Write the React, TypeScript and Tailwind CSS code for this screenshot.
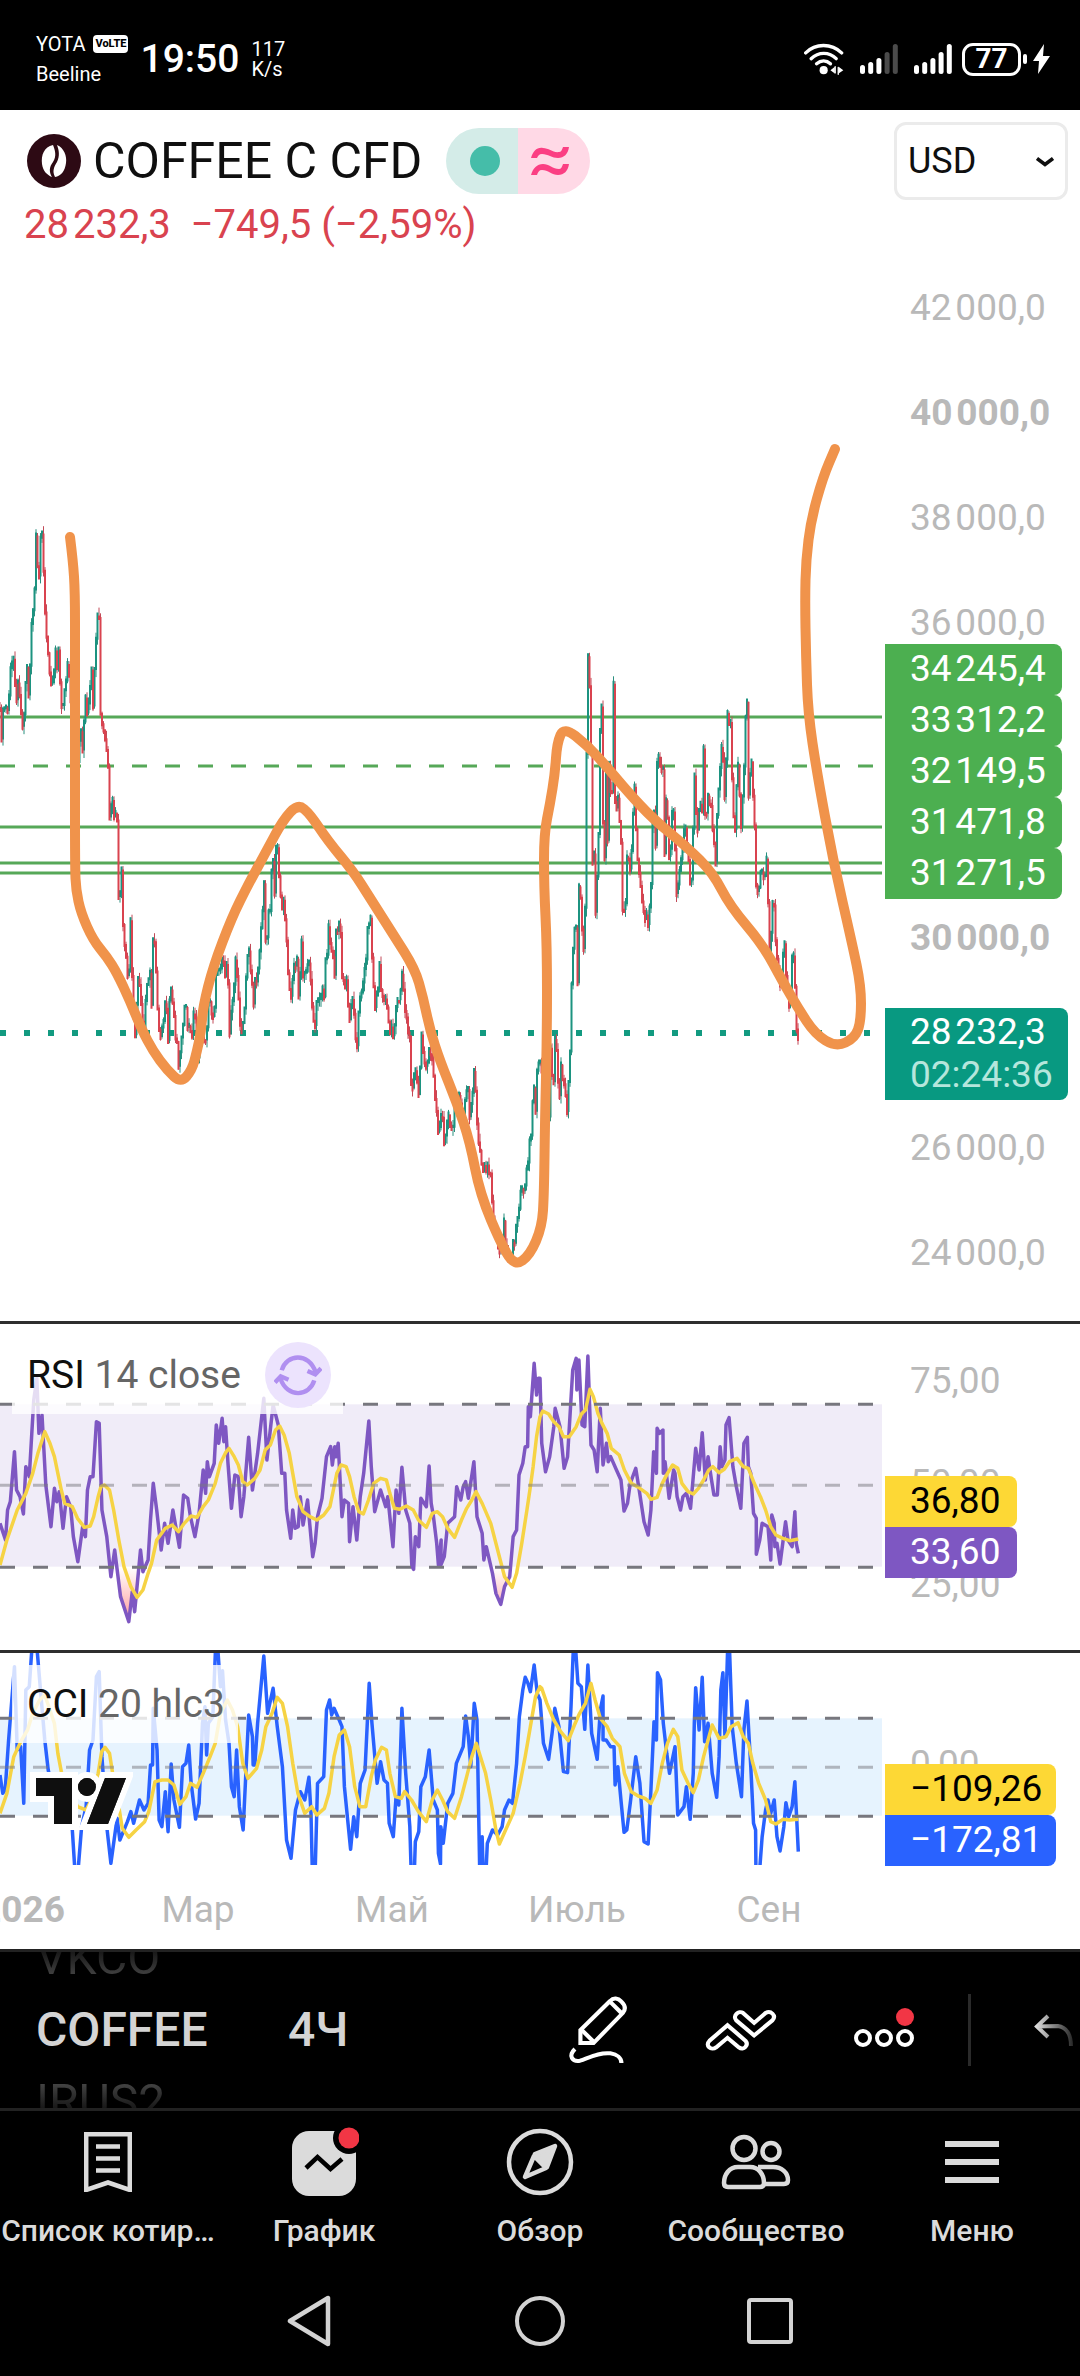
import type { ReactNode } from "react";
import clsx from "clsx";

type Point = [number, number];

/* ---------- data ---------- */

const priceSwings: Point[] = [
  [0, 707], [3, 731], [6, 708], [9, 712], [12, 676], [16, 652], [17, 697], [21, 684], [24, 728],
  [29, 657], [30, 699], [33, 624], [36, 592], [37, 534], [40, 586], [43, 530], [46, 592], [49, 651],
  [53, 695], [57, 642], [59, 676], [60, 644], [62, 691], [65, 710], [69, 658], [72, 700], [74, 740],
  [79, 762], [82, 730], [84, 743], [87, 703], [89, 722], [93, 678], [94, 707], [97, 666], [98, 630],
  [101, 612], [102, 718], [105, 733], [109, 754], [111, 827], [114, 798], [115, 829], [118, 799],
  [120, 906], [123, 871], [124, 927], [127, 959], [130, 988], [132, 923], [134, 994], [137, 1036],
  [140, 967], [145, 1028], [151, 971], [153, 997], [155, 933], [158, 978], [161, 1043], [165, 1013],
  [168, 1005], [169, 1063], [172, 985], [176, 1020], [181, 1066], [184, 1017], [187, 1015],
  [192, 1036], [196, 1012], [200, 1059], [203, 1009], [205, 1051], [211, 1001], [215, 1013],
  [219, 967], [224, 957], [229, 978], [231, 1030], [237, 959], [240, 1001], [244, 1040], [247, 994],
  [250, 940], [255, 1001], [258, 978], [262, 936], [266, 883], [267, 942], [272, 898], [274, 847],
  [276, 887], [278, 848], [281, 871], [283, 909], [286, 906], [288, 946], [291, 996], [298, 955],
  [300, 997], [303, 948], [305, 984], [308, 961], [312, 971], [316, 1038], [319, 994], [325, 994],
  [330, 929], [336, 971], [337, 932], [342, 932], [344, 982], [348, 978], [351, 1022], [354, 997],
  [358, 1053], [361, 997], [367, 974], [369, 932], [372, 909], [374, 971], [377, 1009], [381, 973],
  [386, 994], [390, 1024], [394, 1040], [398, 994], [401, 1013], [404, 963], [406, 1009],
  [411, 1040], [413, 1097], [417, 1064], [420, 1100], [423, 1042], [427, 1074], [430, 1047],
  [434, 1066], [437, 1100], [440, 1129], [443, 1112], [447, 1146], [450, 1107], [452, 1140],
  [458, 1092], [465, 1116], [469, 1081], [471, 1120], [475, 1073], [480, 1133], [485, 1168],
  [492, 1168], [494, 1207], [498, 1238], [502, 1246], [505, 1220], [509, 1251], [513, 1255],
  [518, 1225], [522, 1199], [527, 1181], [531, 1144], [533, 1138], [535, 1071], [537, 1107],
  [539, 1068], [546, 1060], [550, 1138], [552, 1055], [555, 1077], [556, 1023], [561, 1094],
  [563, 1060], [566, 1090], [569, 1107], [571, 1060], [573, 995], [575, 947], [577, 921],
  [579, 977], [581, 862], [584, 938], [586, 947], [587, 869], [589, 652], [591, 691], [593, 773],
  [594, 869], [595, 830], [597, 912], [600, 830], [602, 708], [603, 702], [604, 808], [606, 856],
  [607, 754], [609, 839], [611, 752], [613, 817], [615, 685], [617, 843], [619, 786], [622, 826],
  [624, 906], [627, 899], [629, 843], [632, 878], [636, 782], [638, 856], [642, 878], [645, 904],
  [650, 936], [653, 869], [655, 800], [657, 843], [659, 732], [661, 773], [664, 756], [666, 847],
  [668, 778], [671, 865], [674, 804], [677, 852], [678, 893], [682, 860], [687, 826], [692, 893],
  [694, 850], [696, 773], [699, 834], [701, 793], [703, 834], [705, 745], [707, 830], [709, 786],
  [713, 808], [717, 860], [719, 808], [721, 773], [723, 741], [726, 797], [729, 708], [732, 726],
  [734, 795], [737, 830], [739, 756], [743, 826], [747, 717], [749, 702], [750, 786], [753, 760],
  [756, 830], [758, 908], [763, 856], [765, 880], [768, 856], [771, 947], [775, 891], [777, 947],
  [781, 990], [786, 943], [790, 1014], [795, 947], [797, 1003], [799, 1038],
];

const brush: Point[] = [
  [70, 537], [73, 561], [75, 592], [75, 653], [75, 768], [75, 867], [76, 890], [81, 913], [93, 940],
  [107, 957], [117, 973], [130, 1001], [142, 1030], [153, 1051], [167, 1070], [181, 1083],
  [192, 1070], [197, 1051], [201, 1032], [203, 1007], [213, 967], [232, 917], [248, 885],
  [267, 850], [283, 820], [298, 804], [310, 814], [328, 841], [353, 871], [370, 898], [393, 934],
  [415, 969], [423, 997], [430, 1030], [440, 1061], [457, 1103], [470, 1142], [480, 1194],
  [502, 1246], [515, 1266], [530, 1255], [542, 1227], [544, 1194], [545, 1120], [547, 1034],
  [547, 947], [544, 886], [544, 834], [550, 804], [555, 773], [557, 743], [564, 727], [587, 745],
  [607, 767], [627, 791], [653, 819], [687, 847], [713, 873], [730, 906], [763, 945], [783, 982],
  [798, 1008], [815, 1034], [836, 1047], [855, 1038], [861, 1021], [861, 986], [852, 943],
  [833, 860], [817, 773], [808, 713], [806, 656], [805, 600], [806, 560], [811, 520], [823, 477],
  [835, 449],
];

// indicator series are split in two halves, each one 1568 units wide
const HALF = 1568;
const join = (a: Point[], b: Point[]): Point[] => [...a, ...b.map(([x, y]): Point => [x + HALF, y])];

const rsi = join(
  [
    [0, 640], [16, 690], [22, 600], [30, 575], [42, 425], [48, 540], [58, 560], [68, 612], [75, 470],
    [85, 500], [98, 270], [107, 205], [113, 370], [122, 315], [133, 525], [148, 650], [158, 535],
    [165, 575], [172, 545], [183, 655], [193, 560], [205, 590], [213, 680], [226, 755], [240, 650],
    [248, 680], [254, 540], [262, 500], [270, 500], [280, 335], [288, 340], [296, 600], [310, 680],
    [322, 800], [333, 720], [350, 860], [374, 935], [384, 845], [391, 905], [408, 720], [415, 785],
    [430, 750], [437, 630], [445, 520], [455, 600], [468, 720], [478, 640], [488, 700], [502, 600],
    [521, 712], [533, 555], [545, 565], [553, 620], [566, 680], [578, 610], [590, 480], [597, 550],
    [602, 455], [608, 500], [622, 460], [628, 345], [635, 400], [645, 325], [650, 395], [655, 350],
    [662, 460], [672, 595], [682, 495], [692, 500], [700, 620], [708, 560], [722, 382], [733, 540],
    [748, 430], [766, 265], [775, 450], [793, 285], [808, 345], [818, 490], [827, 490], [832, 600],
    [844, 685], [850, 600], [857, 655], [866, 650], [872, 560], [880, 645], [893, 570], [908, 740],
    [915, 700], [922, 620], [935, 565], [948, 440], [960, 410], [965, 465], [972, 410], [976, 440],
    [982, 400], [993, 620], [1000, 570], [1012, 580], [1015, 695], [1025, 590], [1036, 690],
    [1046, 560], [1056, 490], [1071, 333], [1078, 470], [1088, 605], [1105, 540], [1120, 590],
    [1126, 560], [1141, 710], [1150, 540], [1158, 610], [1167, 472], [1178, 600], [1190, 640],
    [1196, 770], [1201, 778], [1206, 680], [1216, 710], [1222, 565], [1238, 590], [1246, 468],
    [1252, 580], [1258, 615], [1268, 700], [1273, 765], [1281, 690], [1280, 765], [1290, 740],
    [1300, 640], [1320, 620], [1326, 530], [1338, 570], [1345, 530], [1352, 515], [1360, 565],
    [1376, 455], [1385, 620], [1400, 670], [1405, 750], [1412, 710], [1430, 790], [1440, 850],
    [1454, 883], [1465, 830], [1480, 800], [1490, 680], [1500, 660], [1507, 495], [1518, 460],
    [1525, 410], [1532, 410], [1534, 290], [1540, 320], [1551, 160], [1558, 255], [1563, 205],
  ],
  [
    [0, 205], [5, 400], [16, 485], [28, 440], [40, 350], [44, 295], [58, 350], [70, 475], [80, 440],
    [95, 180], [105, 145], [107, 240], [113, 150], [122, 345], [130, 350], [139, 138], [148, 405],
    [157, 420], [166, 485], [175, 295], [183, 465], [193, 400], [198, 455], [205, 440], [222, 480],
    [235, 510], [244, 603], [254, 580], [262, 520], [278, 475], [288, 540], [302, 635], [314, 675],
    [322, 600], [330, 425], [338, 490], [340, 355], [347, 370], [357, 360], [358, 490], [363, 455],
    [375, 565], [388, 480], [392, 490], [398, 560], [408, 600], [415, 560], [425, 550], [437, 595],
    [445, 500], [452, 415], [462, 480], [471, 368], [480, 510], [488, 440], [498, 510], [505, 555],
    [515, 555], [523, 410], [528, 470], [537, 450], [540, 345], [549, 323], [560, 470], [570, 530],
    [583, 595], [592, 400], [602, 382], [605, 470], [612, 490], [620, 610], [628, 625], [628, 733],
    [638, 690], [645, 640], [662, 650], [670, 750], [673, 615], [680, 640], [682, 710], [688, 700],
    [697, 762], [713, 635], [720, 690], [732, 710], [740, 605], [744, 700], [750, 730],
  ],
);

const rsiAverage = join(
  [
    [0, 765], [20, 690], [50, 600], [75, 550], [95, 490], [110, 430], [130, 365], [145, 400],
    [158, 440], [168, 490], [178, 540], [188, 580], [210, 590], [225, 625], [245, 652], [262, 648],
    [272, 620], [285, 560], [293, 530], [303, 525], [318, 540], [330, 600], [345, 690], [360, 770],
    [380, 830], [398, 862], [415, 840], [430, 790], [440, 760], [455, 690], [480, 655], [500, 645],
    [518, 665], [535, 640], [555, 618], [572, 622], [590, 590], [605, 570], [625, 520], [640, 460],
    [655, 428], [665, 415], [680, 440], [692, 465], [705, 515], [718, 525], [740, 505], [755, 480],
    [770, 420], [785, 405], [800, 360], [812, 348], [825, 375], [840, 430], [850, 490], [862, 560],
    [880, 605], [900, 620], [920, 630], [940, 615], [958, 590], [968, 540], [978, 490], [990, 465],
    [1005, 470], [1015, 500], [1028, 560], [1042, 605], [1055, 612], [1070, 570], [1085, 520],
    [1105, 505], [1122, 510], [1132, 550], [1145, 595], [1160, 598], [1180, 588], [1200, 600],
    [1215, 630], [1238, 652], [1255, 610], [1270, 605], [1285, 620], [1300, 655], [1320, 682],
    [1340, 630], [1355, 595], [1370, 570], [1382, 545], [1400, 580], [1425, 640], [1445, 720],
    [1465, 800], [1487, 832], [1500, 790], [1515, 700], [1530, 600], [1540, 530], [1548, 470],
    [1558, 380],
  ],
  [
    [0, 320], [8, 303], [25, 312], [40, 335], [55, 350], [68, 380], [85, 380], [105, 350], [120, 312],
    [132, 300], [145, 238], [155, 260], [168, 310], [180, 340], [195, 370], [207, 415], [230, 435],
    [245, 480], [265, 520], [290, 535], [310, 550], [322, 568], [340, 562], [355, 520], [370, 490],
    [385, 465], [400, 475], [412, 520], [430, 545], [445, 552], [460, 535], [475, 510], [490, 480],
    [502, 470], [520, 488], [535, 478], [550, 455], [572, 445], [590, 470], [605, 475], [622, 520],
    [640, 560], [655, 600], [670, 650], [685, 675], [705, 685], [725, 692], [750, 687],
  ],
);

const cci = join(
  [
    [0, 405], [8, 460], [15, 450], [25, 300], [42, 80], [50, 330], [60, 320], [69, 490], [75, 150],
    [85, 140], [93, 20], [107, 20], [120, 180], [130, 300], [140, 390], [160, 480], [190, 500],
    [210, 570], [218, 700], [226, 700], [237, 560], [250, 500], [260, 330], [270, 300], [280, 110],
    [288, 95], [296, 350], [310, 560], [322, 670], [340, 535], [348, 600], [370, 545], [380, 515],
    [388, 550], [405, 480], [418, 510], [430, 490], [437, 375], [443, 375], [445, 205], [456, 330],
    [462, 540], [470, 560], [480, 455], [488, 575], [497, 372], [505, 480], [521, 562], [530, 380],
    [540, 370], [548, 315], [555, 430], [568, 537], [578, 490], [588, 250], [595, 200], [600, 345],
    [605, 250], [618, 230], [626, 20], [632, 20], [640, 140], [646, 92], [655, 240], [665, 310],
    [672, 440], [680, 470], [687, 330], [695, 500], [706, 570], [722, 225], [733, 290], [735, 375],
    [740, 375], [748, 250], [756, 160], [766, 48], [777, 220], [793, 145], [805, 260], [820, 380],
    [832, 600], [845, 655], [858, 510], [872, 455], [885, 480], [897, 412], [903, 520], [907, 700],
    [915, 700], [922, 430], [940, 410], [948, 210], [957, 180], [963, 225], [970, 205], [985, 240],
    [993, 260], [1000, 440], [1018, 628], [1027, 530], [1036, 590], [1046, 430], [1060, 390],
    [1072, 130], [1080, 250], [1095, 430], [1105, 365], [1115, 420], [1125, 430], [1130, 550],
    [1142, 590], [1150, 470], [1158, 495], [1167, 205], [1178, 400], [1190, 560], [1194, 700],
    [1203, 700], [1206, 605], [1216, 575], [1222, 440], [1235, 410], [1246, 330], [1258, 480],
    [1270, 510], [1273, 640], [1279, 672], [1280, 560], [1287, 610], [1300, 490], [1315, 460],
    [1325, 370], [1345, 320], [1352, 228], [1360, 290], [1367, 380], [1377, 190], [1385, 240],
    [1393, 700], [1400, 590], [1403, 700], [1411, 700], [1415, 610], [1430, 570], [1445, 585],
    [1458, 560], [1465, 510], [1478, 480], [1488, 490], [1500, 370], [1508, 230], [1518, 150],
    [1525, 112], [1533, 130], [1540, 155], [1551, 75], [1560, 160],
  ],
  [
    [0, 180], [10, 310], [25, 358], [35, 280], [43, 205], [55, 260], [68, 395], [80, 398], [90, 200],
    [97, 20], [103, 20], [110, 130], [120, 140], [130, 268], [139, 75], [150, 280], [166, 358],
    [175, 210], [183, 168], [183, 300], [192, 300], [205, 320], [215, 320], [218, 435], [226, 380],
    [235, 480], [244, 577], [252, 570], [262, 490], [278, 350], [290, 430], [302, 605], [314, 612],
    [322, 450], [331, 245], [338, 300], [341, 98], [350, 120], [358, 250], [368, 340], [376, 400],
    [392, 320], [400, 525], [418, 500], [425, 440], [436, 538], [445, 400], [448, 250], [452, 143],
    [462, 270], [471, 112], [478, 305], [488, 250], [500, 400], [513, 472], [520, 350], [525, 150],
    [531, 98], [537, 290], [545, 20], [550, 20], [558, 260], [570, 370], [585, 470], [592, 270],
    [601, 183], [612, 380], [620, 550], [626, 570], [627, 700], [637, 700], [645, 590], [655, 510],
    [662, 480], [670, 520], [680, 480], [688, 590], [697, 633], [708, 560], [714, 488], [722, 530],
    [732, 500], [740, 425], [750, 635],
  ],
);

const cciAverage = join(
  [
    [0, 520], [20, 460], [40, 350], [60, 305], [80, 270], [95, 220], [115, 180], [130, 165],
    [145, 210], [158, 250], [168, 340], [178, 395], [200, 440], [225, 500], [250, 510], [270, 470],
    [285, 400], [295, 335], [305, 322], [318, 340], [330, 420], [345, 500], [355, 565], [374, 592],
    [395, 570], [420, 545], [432, 515], [450, 425], [470, 420], [488, 420], [505, 435], [522, 493],
    [540, 470], [553, 430], [572, 442], [590, 400], [610, 350], [625, 310], [640, 220], [660, 180],
    [675, 210], [690, 260], [705, 370], [720, 415], [745, 385], [760, 330], [772, 260], [790, 220],
    [805, 172], [820, 190], [835, 260], [850, 370], [865, 460], [885, 520], [905, 500], [920, 525],
    [942, 505], [955, 460], [970, 350], [985, 285], [1000, 270], [1015, 320], [1030, 440],
    [1045, 500], [1062, 500], [1078, 410], [1090, 360], [1108, 322], [1122, 330], [1132, 400],
    [1148, 470], [1165, 475], [1175, 455], [1195, 480], [1215, 515], [1238, 545], [1255, 480],
    [1270, 450], [1285, 480], [1300, 515], [1320, 535], [1340, 470], [1355, 410], [1370, 350],
    [1383, 310], [1395, 350], [1410, 400], [1425, 480], [1440, 570], [1450, 612], [1468, 570],
    [1490, 520], [1510, 430], [1525, 350], [1540, 260], [1555, 170],
  ],
  [
    [0, 140], [5, 145], [20, 190], [40, 240], [60, 275], [82, 302], [100, 255], [115, 220],
    [132, 190], [148, 130], [160, 180], [175, 235], [195, 260], [210, 295], [232, 320], [245, 400],
    [265, 455], [285, 468], [305, 475], [322, 490], [340, 450], [355, 370], [370, 310], [387, 268],
    [400, 290], [412, 390], [430, 430], [445, 458], [460, 420], [475, 350], [488, 300], [500, 255],
    [520, 295], [540, 290], [555, 260], [575, 248], [590, 290], [605, 310], [618, 370], [635, 430],
    [655, 480], [670, 545], [685, 552], [705, 538], [725, 540], [750, 538],
  ],
);

// prices group their thousands with a hair space
const priceTicks = [
  { label: "42\u200a000,0" },
  { label: "40\u200a000,0", major: true },
  { label: "38\u200a000,0" },
  { label: "36\u200a000,0" },
  { label: "" },
  { label: "" },
  { label: "30\u200a000,0", major: true },
  { label: "" },
  { label: "26\u200a000,0" },
  { label: "24\u200a000,0" },
];

const levelLabels = ["34\u200a245,4", "33\u200a312,2", "32\u200a149,5", "31\u200a471,8", "31\u200a271,5"];

/* ---------- path helpers ---------- */

const line = (points: Point[]) => "M" + points.map(([x, y]) => `${x} ${y}`).join("L");

// quadratic segments through the midpoints give a hand-drawn curve
function smooth(points: Point[]) {
  let d = `M${points[0][0]} ${points[0][1]}`;
  for (let i = 1; i < points.length - 1; i++) {
    const [x, y] = points[i];
    const [nx, ny] = points[i + 1];
    d += `Q${x} ${y} ${(x + nx) / 2} ${(y + ny) / 2}`;
  }
  const last = points[points.length - 1];
  return d + `L${last[0]} ${last[1]}`;
}

const noise = (n: number) => {
  const v = Math.sin(n * 12.9898) * 43758.5453;
  return v - Math.floor(v);
};

const BAR = 1.5;

function buildCandles(points: Point[]) {
  const out = { upBody: "", upWick: "", downBody: "", downWick: "" };
  let seg = 0;
  const at = (x: number) => {
    while (seg < points.length - 2 && points[seg + 1][0] < x) seg++;
    const [x0, y0] = points[seg];
    const [x1, y1] = points[seg + 1];
    return y0 + ((y1 - y0) * (x - x0)) / (x1 - x0);
  };
  let open = points[0][1];
  const end = points[points.length - 1][0];
  for (let i = 0; i * BAR < end; i++) {
    const x = i * BAR;
    const close = at(x + BAR) + (noise(i) - 0.5) * 20;
    const top = Math.min(open, close) - noise(i + 500) * 8;
    const low = Math.max(open, close) + noise(i + 900) * 8;
    const body = `M${x} ${open.toFixed(1)}V${(close + (close > open ? 3 : -3)).toFixed(1)}`;
    const wick = `M${x} ${top.toFixed(1)}V${low.toFixed(1)}`;
    if (close < open) {
      out.upBody += body;
      out.upWick += wick;
    } else {
      out.downBody += body;
      out.downWick += wick;
    }
    open = close;
  }
  return out;
}

const candles = buildCandles(priceSwings);

/* ---------- status bar ---------- */

function SignalBars({ active }: { active: number }) {
  return (
    <svg viewBox="0 0 38 30" className="w-[38px] h-[30px]">
      {[9, 12, 16, 22, 30].map((h, i) => (
        <rect key={h} x={i * 8.2} y={30 - h} width="5" height={h} rx="2.5" fill={i < active ? "#fff" : "#4b4b4b"} />
      ))}
    </svg>
  );
}

function StatusBar() {
  return (
    <div className="flex items-center justify-between pl-9 pr-[30px] pt-2 h-[110px] bg-black text-white">
      <div className="flex items-center">
        <div className="flex flex-col text-[20px] leading-[30px]">
          <div className="flex items-center gap-2">
            <span>YOTA</span>
            <span className="rounded bg-white px-[2px] text-[11px] leading-[18px] font-extrabold text-black">VoLTE</span>
          </div>
          <span>Beeline</span>
        </div>
        <span className="ml-3 text-[39px] leading-[44px] font-medium">19:50</span>
        <div className="ml-3 flex flex-col text-[20px] leading-[20px]">
          <span>117</span>
          <span>K/s</span>
        </div>
      </div>
      <div className="flex items-center">
        <svg viewBox="74 70 118 94" className="w-[40px] h-[32px] mr-4" fill="none" stroke="#fff" strokeWidth="10" strokeLinecap="round">
          <path d="M79 99C108 70 155 70 185 99" />
          <path d="M95 116C117 95 148 95 169 116" />
          <path d="M111 131C124 120 140 120 152 131" />
          <circle cx="132" cy="150" r="12" fill="#fff" stroke="none" />
          <path d="M152 150L165 140V160ZM190 150L176 140V160Z" fill="#fff" stroke="none" />
          <path d="M166 140V158M175 142V162" strokeWidth="4" />
        </svg>
        <SignalBars active={3} />
        <div className="w-4" />
        <SignalBars active={5} />
        <div className="ml-[10px] flex h-[33px] w-[59px] items-center justify-center rounded-[11px] border-[3px] border-white text-[28px] leading-[28px] font-bold">
          77
        </div>
        <div className="ml-[2px] h-[10px] w-[4px] rounded-sm bg-white" />
        <svg viewBox="0 0 17 30" className="ml-[6px] w-[17px] h-[30px]" fill="#fff">
          <path d="M11 0L0 17H6L5 30L17 12H10Z" />
        </svg>
      </div>
    </div>
  );
}

/* ---------- chart ---------- */

function ChartHeader() {
  return (
    <header className="flex items-start justify-between pl-6 pr-3 pt-3 pb-2 bg-white">
      <div className="pt-[6px]">
        <div className="flex items-center h-[66px]">
          <svg viewBox="0 0 54 54" className="ml-[3px] w-[54px] h-[54px]">
            <circle cx="27" cy="27" r="27" fill="#2d0a14" />
            <path d="M26 11C17 13 14 21 15 30C16 37 20 41 25 43C22 38 22 33 26 28C30 22 28 16 26 11Z" fill="#fff" />
            <path d="M30 11C37 14 40 22 39 29C38 37 34 42 28 43C25 37 27 33 30 28C33 22 32 16 30 11Z" fill="#fff" />
          </svg>
          <h1 className="ml-3 text-[50px] leading-[60px] text-[#0f0f0f] whitespace-nowrap">COFFEE C CFD</h1>
          <div className="ml-6 flex overflow-hidden rounded-full">
            <div className="flex h-[66px] w-[72px] items-center justify-center bg-[#d4ece8]">
              <span className="ml-[6px] size-[30px] rounded-full bg-[#45bda9]" />
            </div>
            <div className="flex h-[66px] w-[72px] items-center justify-center bg-[#ffd9e6]">
              <svg viewBox="0 0 38 28" className="mr-[8px] w-[38px] h-[28px]" fill="#fb3f83">
                <path d="M0 11C2 4 6 0 12 1C18 1 22 6 28 5C30 5 31 3 32 0H38C37 7 33 11 27 11C21 11 17 7 11 7C8 7 7 9 6 11Z" />
                <path d="M0 28C2 21 6 17 12 17C18 17 22 22 28 22C30 22 31 20 32 17H38C37 24 33 28 27 28C21 28 17 23 11 23C8 23 7 25 6 28Z" />
              </svg>
            </div>
          </div>
        </div>
        <p className="mt-[9px] text-[40px] leading-[44px] text-[#d9434f] whitespace-pre">
          {"28\u200a232,3  −749,5 (−2,59%)"}
        </p>
      </div>
      <div className="relative">
        <select
          aria-label="Валюта"
          className="block h-[78px] w-[174px] appearance-none rounded-[12px] border-[3px] border-[#ebebeb] bg-white pl-[11px] text-[36px] text-[#0f0f0f]"
        >
          <option>USD</option>
        </select>
        <svg viewBox="0 0 18 10" className="pointer-events-none absolute right-[14px] top-[35px] w-[18px] h-[10px]" fill="none" stroke="#0f0f0f" strokeWidth="3.6">
          <path d="M1 1.5L9 7.5L17 1.5" />
        </svg>
      </div>
    </header>
  );
}

function Pill({ className, children }: { className: string; children: ReactNode }) {
  return (
    <div className={clsx("rounded-r-[8px] pl-[25px] h-[51px] text-[37px] leading-[49px] whitespace-nowrap", className)}>
      {children}
    </div>
  );
}

function PricePane() {
  const solid = [717, 827, 863, 873];
  return (
    <div className="flex pb-4 bg-white">
      <div className="relative min-w-0 flex-1">
        <svg viewBox="0 255 882 1050" preserveAspectRatio="none" className="absolute inset-0 h-full w-full" fill="none">
          <g stroke="#56a858" strokeWidth="3">
            {solid.map((y) => (
              <path key={y} d={`M0 ${y}H882`} />
            ))}
            <path d="M0 766H874" strokeDasharray="15 18" />
          </g>
          <path d="M0 1033H872" stroke="#129a80" strokeWidth="6" strokeDasharray="6 18" />
          <path d={candles.upWick} stroke="#2a8f7f" strokeWidth="1" />
          <path d={candles.downWick} stroke="#c24a58" strokeWidth="1" />
          <path d={candles.upBody} stroke="#1c9380" strokeWidth="2" />
          <path d={candles.downBody} stroke="#d9434f" strokeWidth="2" />
          <path d={smooth(brush)} stroke="#f0934b" strokeWidth="10" strokeLinecap="round" strokeLinejoin="round" />
        </svg>
      </div>
      <div className="relative w-[198px] shrink-0">
        {priceTicks.map((tick, i) => (
          <div
            key={i}
            className={clsx(
              "h-[105px] pl-7 text-[37px] leading-[106px] text-[#b9b9b9] whitespace-nowrap",
              tick.major && "font-bold",
            )}
          >
            {tick.label}
          </div>
        ))}
        <div className="absolute left-[3px] top-[389px] w-[177px]">
          {levelLabels.map((label) => (
            <Pill key={label} className="bg-[#4caf50] text-white">
              {label}
            </Pill>
          ))}
        </div>
        <div className="absolute left-[3px] top-[753px] w-[183px] rounded-r-[8px] bg-[#089981] pt-[2px] pb-1 pl-[25px] text-[37px] leading-[43px] text-white">
          <div>{"28\u200a232,3"}</div>
          <div className="text-[#b5e6dc]">02:24:36</div>
        </div>
      </div>
    </div>
  );
}

type IndicatorProps = {
  viewBox: string;
  levels: [number, number, number];
  band: string;
  color: string;
  series: Point[];
  average: Point[];
  extra?: ReactNode;
};

function IndicatorPlot({ viewBox, levels, band, color, series, average, extra }: IndicatorProps) {
  const [top, middle, bottom] = levels;
  return (
    <svg viewBox={viewBox} preserveAspectRatio="none" className="absolute inset-0 h-full w-full" fill="none">
      <rect x="0" y={top} width="2561" height={bottom - top - 2} fill={band} />
      {extra}
      <g strokeLinejoin="round" strokeWidth="3.5">
        <path d={line(series)} stroke={color} vectorEffect="non-scaling-stroke" />
        <path d={line(average)} stroke="#f6d344" vectorEffect="non-scaling-stroke" />
      </g>
      <g strokeWidth="3" strokeDasharray="15 18">
        <path d={`M0 ${top}H2540`} stroke="#77777e" vectorEffect="non-scaling-stroke" />
        <path d={`M0 ${middle}H2540`} stroke="#77777e" strokeOpacity="0.5" vectorEffect="non-scaling-stroke" />
        <path d={`M0 ${bottom}H2540`} stroke="#77777e" vectorEffect="non-scaling-stroke" />
      </g>
    </svg>
  );
}

function RsiPane() {
  return (
    <div className="flex border-t-[3px] border-[#2e2e2e] bg-white">
      <div className="relative min-w-0 flex-1 overflow-hidden">
        <IndicatorPlot
          viewBox="0 42 2561 978"
          levels={[283, 526, 772]}
          band="#f0ecf8"
          color="#7e57c2"
          series={rsi}
          average={rsiAverage}
          extra={
            <>
              <defs>
                <linearGradient id="oversold" gradientUnits="userSpaceOnUse" x1="0" y1="772" x2="0" y2="940">
                  <stop offset="0" stopColor="#ff5252" stopOpacity="0" />
                  <stop offset="1" stopColor="#ff5252" stopOpacity="0.6" />
                </linearGradient>
                <clipPath id="below">
                  <rect x="0" y="772" width="2561" height="300" />
                </clipPath>
              </defs>
              <path d={`${line(rsi)}V772H0Z`} fill="url(#oversold)" clipPath="url(#below)" />
            </>
          }
        />
        <div className="relative ml-3 mt-3 flex h-[78px] w-[331px] items-center bg-white/80 pl-[15px]">
          <span className="whitespace-pre text-[39px] leading-[44px] text-[#666]">
            <span className="text-[#0f0f0f]">RSI</span> 14 close
          </span>
          <span className="ml-6 flex size-[66px] items-center justify-center rounded-full bg-[#ece3fd]">
            <svg viewBox="796 132 140 124" className="w-[48px] h-[42px]" fill="none" stroke="#b08ff0" strokeWidth="13">
              <path d="M818 180C832 132 898 126 918 186" />
              <path d="M934 174L917 192L894 182" />
              <path d="M914 210C900 258 834 264 814 204" />
              <path d="M798 216L815 198L838 208" />
            </svg>
          </span>
        </div>
      </div>
      <div className="relative w-[198px] shrink-0 pt-[6px] pb-[14px]">
        {["75,00", "50,00", "25,00"].map((label) => (
          <div key={label} className="h-[102px] pl-7 text-[37px] leading-[102px] text-[#b9b9b9]">
            {label}
          </div>
        ))}
        <div className="absolute left-[3px] top-[152px] w-[132px]">
          <Pill className="bg-[#fdd835] text-black">36,80</Pill>
          <Pill className="bg-[#7e57c2] text-white">33,60</Pill>
        </div>
      </div>
    </div>
  );
}

function CciPane() {
  return (
    <div className="flex border-t-[3px] border-[#2e2e2e] bg-white">
      <div className="relative min-w-0 flex-1 overflow-hidden">
        <IndicatorPlot
          viewBox="0 39 2561 636"
          levels={[235, 382, 529]}
          band="#e6f3fe"
          color="#2962ff"
          series={cci}
          average={cciAverage}
        />
        <div className="relative ml-3 mt-3 flex h-[78px] w-[226px] items-center bg-white/80 pl-[15px]">
          <span className="whitespace-pre text-[39px] leading-[44px] text-[#666]">
            <span className="text-[#0f0f0f]">CCI</span> 20 hlc3
          </span>
        </div>
        <svg viewBox="-6 -6 103 58" className="relative ml-[30px] mt-[29px] w-[103px] h-[58px]">
          <g fill="#0f0f0f" stroke="#fff" strokeWidth="12" paintOrder="stroke">
            <path d="M0 0H36V46H18V18H0Z" />
            <circle cx="51" cy="9" r="9" />
            <path d="M69 0H90L72 46H51Z" />
          </g>
          <g fill="#0f0f0f">
            <path d="M0 0H36V46H18V18H0Z" />
            <circle cx="51" cy="9" r="9" />
            <path d="M69 0H90L72 46H51Z" />
          </g>
        </svg>
      </div>
      <div className="relative w-[198px] shrink-0 pt-[60px] pb-[50px]">
        <div className="h-[102px] pl-7 text-[37px] leading-[102px] text-[#b9b9b9]">0,00</div>
        <div className="absolute left-[3px] top-[111px] w-[171px]">
          <Pill className="bg-[#fdd835] text-black">−109,26</Pill>
          <Pill className="bg-[#2962ff] text-white">−172,81</Pill>
        </div>
      </div>
    </div>
  );
}

function TimeAxis() {
  return (
    <div className="flex bg-white text-[37px] leading-[84px] text-[#b9b9b9]">
      <div className="grid min-w-0 flex-1 grid-cols-[110fr_176fr_212fr_158fr_226fr] overflow-hidden text-center pt-[3px] -mb-[3px]">
        <span className="flex min-w-0 justify-end pr-[45px] font-bold">2026</span>
        <span>Мар</span>
        <span>Май</span>
        <span>Июль</span>
        <span>Сен</span>
      </div>
      <div className="w-[198px] shrink-0" />
    </div>
  );
}

/* ---------- toolbar and navigation ---------- */

function Toolbar() {
  return (
    <div className="flex items-center h-[162px] border-y-[3px] border-[#222] bg-black text-white overflow-hidden">
      <div className="ml-9 flex w-[252px] shrink-0 flex-col text-[48px] leading-[72px]">
        <span className="bg-linear-to-b from-black to-[#666] bg-clip-text text-transparent">VKCO</span>
        <button className="text-left font-medium text-[#d4d4d4]">COFFEE</button>
        <span className="bg-linear-to-t from-black to-[#666] bg-clip-text text-transparent">IRUS2</span>
      </div>
      <button className="text-[48px] leading-[72px] font-medium text-[#d4d4d4]">4Ч</button>
      <div className="ml-auto flex items-center">
        <button aria-label="Рисование" className="flex w-[143px] justify-center">
          <svg viewBox="80 165 180 210" preserveAspectRatio="none" className="w-[62px] h-[70px]" fill="none" stroke="#fff" strokeWidth="12">
            <path d="M119 309V270L205 183C215 172 228 174 238 185C249 196 251 208 242 219L157 309Z" />
            <path d="M204 184L241 222M121 268L158 306" />
            <path d="M103 327C82 348 96 366 118 362C146 352 174 336 206 340C226 343 238 354 238 369" />
          </svg>
        </button>
        <button aria-label="Индикаторы" className="flex w-[143px] justify-center">
          <svg viewBox="480 203 208 130" preserveAspectRatio="none" className="w-[72px] h-[43px]" fill="none" stroke="#fff" strokeWidth="12" strokeLinejoin="miter">
            <path d="M545 252L597 299C607 312 592 330 578 319L545 290L512 319C498 330 479 314 493 299Z" />
            <path d="M622 283L570 237C559 224 577 206 590 215L622 245L655 215C670 206 687 223 675 237Z" />
          </svg>
        </button>
        <button aria-label="Ещё" className="flex w-[143px] justify-center">
          <svg viewBox="0 0 62 58" className="w-[62px] h-[58px]" fill="none" stroke="#fff" strokeWidth="4">
            <circle cx="10" cy="37" r="7" />
            <circle cx="31" cy="37" r="7" />
            <circle cx="52" cy="37" r="7" />
            <circle cx="52" cy="16" r="12" fill="#000" stroke="none" />
            <circle cx="52" cy="16" r="9" fill="#f23645" stroke="none" />
          </svg>
        </button>
        <div className="ml-[13px] h-[72px] w-[3px] bg-[#2a2a2a]" />
        <button aria-label="Отменить" className="ml-[63px] mr-[6px]">
          <svg viewBox="0 0 40 32" className="w-[40px] h-[32px]" fill="none" stroke="url(#fade)" strokeWidth="4">
            <defs>
              <linearGradient id="fade" gradientUnits="userSpaceOnUse" x1="0" y1="0" x2="40" y2="0">
                <stop offset="0" stopColor="#e8e8e8" />
                <stop offset="1" stopColor="#222" />
              </linearGradient>
            </defs>
            <path d="M14 2L3 12.500L14 23M3 12.500L24 12C32 13 37 20 37 32" />
          </svg>
        </button>
      </div>
    </div>
  );
}

const tabs = [
  {
    label: "Список котир…",
    icon: (
      <svg viewBox="0 0 48 60" className="w-[48px] h-[60px]" fill="none" stroke="#dbdbdb" strokeWidth="4.500">
        <path d="M2.200 2.200H45.800V58L24 50.500L2.200 58Z" />
        <path d="M12 14.500H36M12 26.500H36M12 38.500H36" />
      </svg>
    ),
  },
  {
    label: "График",
    icon: (
      <svg viewBox="0 0 70 70" className="w-[70px] h-[70px]">
        <rect x="3" y="4" width="64" height="65" rx="17" fill="#dbdbdb" />
        <path d="M17 41L28.500 30L41.500 42L53 32" fill="none" stroke="#000" strokeWidth="4.500" />
        <circle cx="60" cy="11" r="16" fill="#000" />
        <circle cx="60" cy="11" r="10.500" fill="#f23645" />
      </svg>
    ),
  },
  {
    label: "Обзор",
    icon: (
      <svg viewBox="0 0 68 68" className="w-[68px] h-[68px]" fill="none" stroke="#dbdbdb" strokeWidth="4.500" strokeLinejoin="round">
        <circle cx="34" cy="34" r="31" />
        <path d="M29 26L49 18L41 39Z" fill="#dbdbdb" />
        <path d="M28 28L19 49L40 40Z" />
      </svg>
    ),
  },
  {
    label: "Сообщество",
    icon: (
      <svg viewBox="0 0 70 56" className="w-[70px] h-[56px]" fill="none" stroke="#dbdbdb" strokeWidth="4.500" strokeLinejoin="round">
        <circle cx="23" cy="14.500" r="11.500" />
        <circle cx="50" cy="17.500" r="8.500" />
        <path d="M17 33H29C38 33 43 41 43 49C43 51.500 41.500 53 39 53H7C4.500 53 3 51.500 3 49C3 41 8 33 17 33Z" />
        <path d="M37 33H52C61 33 67 39 67 46C67 49 65.500 50 63 50H44" />
      </svg>
    ),
  },
  {
    label: "Меню",
    icon: (
      <svg viewBox="0 0 54 42" className="w-[54px] h-[42px]" fill="#dbdbdb">
        <path d="M0 0H54V6H0ZM0 18H54V24H0ZM0 36H54V42H0Z" />
      </svg>
    ),
  },
];

function TabBar() {
  return (
    <nav className="grid grid-cols-5 bg-black pt-[14px] pb-4">
      {tabs.map((tab) => (
        <a
          key={tab.label}
          href="#"
          className="flex min-w-0 flex-col items-center text-[30px] leading-[40px] font-medium text-[#dbdbdb] whitespace-nowrap"
        >
          <span className="flex h-[74px] items-center">{tab.icon}</span>
          <span className="mt-3">{tab.label}</span>
        </a>
      ))}
    </nav>
  );
}

function SystemNav() {
  return (
    <div className="flex flex-1 justify-center bg-black pt-7 pb-9">
      <button aria-label="Назад" className="flex w-[230px] items-center justify-center">
        <svg viewBox="0 0 46 52" className="w-[46px] h-[52px]" fill="none" stroke="#d3d3d3" strokeWidth="4.500" strokeLinejoin="round">
          <path d="M41 3V49L3 26Z" />
        </svg>
      </button>
      <button aria-label="Домой" className="flex w-[230px] items-center justify-center">
        <span className="size-[50px] rounded-full border-[4px] border-[#d3d3d3]" />
      </button>
      <button aria-label="Недавние" className="flex w-[230px] items-center justify-center">
        <span className="size-[46px] rounded-[4px] border-[4px] border-[#d3d3d3]" />
      </button>
    </div>
  );
}

export default function App() {
  return (
    <div className="flex min-h-screen flex-col overflow-hidden bg-black font-['Roboto','Noto_Sans',sans-serif]">
      <StatusBar />
      <main>
        <ChartHeader />
        <PricePane />
        <RsiPane />
        <CciPane />
        <TimeAxis />
      </main>
      <Toolbar />
      <TabBar />
      <SystemNav />
    </div>
  );
}
